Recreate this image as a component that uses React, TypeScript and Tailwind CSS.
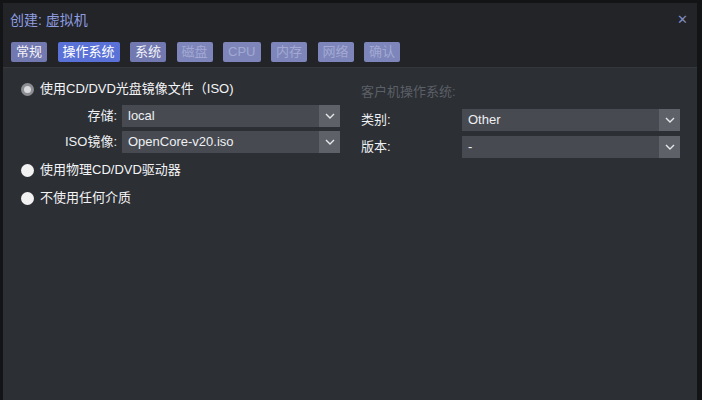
import React from "react";

const font = { fontFamily: '"Liberation Sans", "Noto Sans CJK SC", sans-serif' };

function Chevron() {
  return (
    <svg width="10" height="6" viewBox="0 0 10 6" fill="none">
      <path d="M1 1l4 4 4-4" stroke="#e6e7ea" strokeWidth="1.4" />
    </svg>
  );
}

function Select({ value, width }: { value: string; width: string }) {
  return (
    <div className={`flex h-[22px] ${width} bg-[#474a51]`}>
      <div className="flex-1 pl-[6px] text-[13px] leading-[22px] text-[#eef0f3]">{value}</div>
      <div className="flex w-[21px] items-center justify-center bg-[#5e6168]">
        <Chevron />
      </div>
    </div>
  );
}

function Radio({ label, checked }: { label: string; checked?: boolean }) {
  return (
    <div className="flex items-center gap-[6px] h-[20px]">
      {checked ? (
        <span className="w-[13px] h-[13px] rounded-full bg-[#8d8f94] flex items-center justify-center">
          <span className="w-[7px] h-[7px] rounded-full bg-[#d9dadc]" />
        </span>
      ) : (
        <span className="w-[13px] h-[13px] rounded-full bg-[#f2f2f2]" />
      )}
      <span className="text-[13px] text-[#f3f4f6]">{label}</span>
    </div>
  );
}

const tabs = [
  { t: "常规", s: "on" },
  { t: "操作系统", s: "active" },
  { t: "系统", s: "on" },
  { t: "磁盘", s: "off" },
  { t: "CPU", s: "off" },
  { t: "内存", s: "off" },
  { t: "网络", s: "off" },
  { t: "确认", s: "off" },
];

export default function App() {
  return (
    <div className="w-[702px] h-[400px] bg-[#131416] pt-[3px] pl-[3px] pr-[5px] flex" style={font}>
      <div className="flex-1 flex flex-col">
        <div className="h-[65px] bg-[#222428] border-b border-[#34373c] px-[7px]">
          <div className="flex items-center justify-between h-[32px] pt-[2px]">
            <span className="text-[14px] text-[#8f9de0]">创建: 虚拟机</span>
            <span className="text-[13px] text-[#7f8bc0] mr-[2px]">✕</span>
          </div>
          <div className="flex gap-[10.5px] pt-[7px] pl-[1px]">
            {tabs.map((x) => (
              <div
                key={x.t}
                className={
                  "h-[20px] px-[5px] text-[13px] leading-[20px] rounded-[2px] " +
                  (x.s === "active"
                    ? "bg-[#5a72d8] text-white"
                    : x.s === "on"
                    ? "bg-[#7279b1] text-[#f2f3f8]"
                    : "bg-[#7d85bb] text-[#a3a9d2]")
                }
              >
                {x.t}
              </div>
            ))}
          </div>
        </div>
        <div className="flex-1 bg-[#2c2f34] flex pt-[11px]">
          <div className="w-[345px] pl-[18px] flex flex-col">
            <Radio label="使用CD/DVD光盘镜像文件（ISO)" checked />
            <div className="flex flex-col gap-[4px] mt-[6px]">
              <div className="flex items-center">
                <span className="w-[101px] text-right pr-[5px] text-[13px] text-[#eef0f3]">存储:</span>
                <Select value="local" width="w-[218px]" />
              </div>
              <div className="flex items-center">
                <span className="w-[101px] text-right pr-[5px] text-[13px] text-[#eef0f3]">ISO镜像:</span>
                <Select value="OpenCore-v20.iso" width="w-[218px]" />
              </div>
            </div>
            <div className="mt-[7px] flex flex-col gap-[8px]">
              <Radio label="使用物理CD/DVD驱动器" />
              <Radio label="不使用任何介质" />
            </div>
          </div>
          <div className="flex-1 flex flex-col pt-[3px] pl-[13px]">
            <div className="text-[13px] text-[#5b5f66] h-[18px]">客户机操作系统:</div>
            <div className="flex flex-col gap-[5px] mt-[9px]">
              <div className="flex items-center">
                <span className="w-[101px] text-[13px] text-[#eef0f3]">类别:</span>
                <Select value="Other" width="w-[218px]" />
              </div>
              <div className="flex items-center">
                <span className="w-[101px] text-[13px] text-[#eef0f3]">版本:</span>
                <Select value="-" width="w-[218px]" />
              </div>
            </div>
          </div>
        </div>
      </div>
    </div>
  );
}
